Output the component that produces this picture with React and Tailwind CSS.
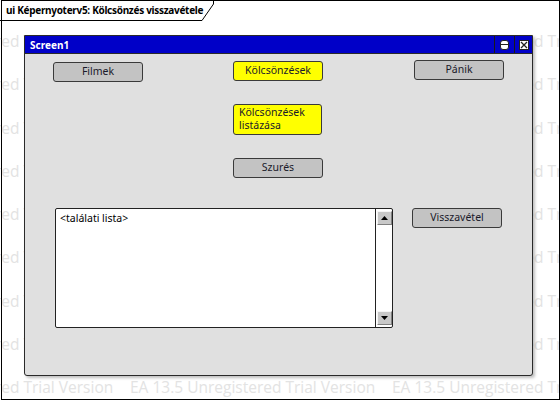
import React from "react";

const WM = "EA 13.5 Unregistered Trial Version";

function Watermark() {
  const rows = [0, 1, 2, 3, 4, 5, 6, 7, 8];
  return (
    <div className="absolute inset-0 z-0 pointer-events-none overflow-hidden">
      {rows.map((r) => (
        <div
          key={r}
          className="absolute left-[-132px] whitespace-nowrap text-[15.5px] leading-[20px] text-[#e3e3e3] font-['Open_Sans',sans-serif]"
          style={{ top: Math.round(31 + r * 43.25) }}
        >
          {[0, 1, 2, 3].map((i) => (
            <span key={i} className="inline-block w-[262px]">
              {WM}
            </span>
          ))}
        </div>
      ))}
    </div>
  );
}

function Btn({ children, yellow, className = "" }) {
  return (
    <div
      className={`w-[90px] h-[20px] rounded-[3px] border border-[#3a3a3a] flex items-center justify-center text-[10.5px] text-[#1a1a2a] ${
        yellow ? "bg-[#ffff00]" : "bg-[#c3c3c3]"
      } ${className}`}
    >
      {children}
    </div>
  );
}

function ScrollBtn({ up }) {
  return (
    <div className="w-[15px] h-[14px] bg-[#c8c8c8] border-t border-l border-t-[#f4f4f4] border-l-[#f4f4f4] border-r border-b border-r-[#808080] border-b-[#808080] flex items-center justify-center">
      <svg width="7" height="4" viewBox="0 0 7 4">
        {up ? (
          <polygon points="3.5,0 7,4 0,4" fill="#000" />
        ) : (
          <polygon points="0,0 7,0 3.5,4" fill="#000" />
        )}
      </svg>
    </div>
  );
}

export default function App() {
  return (
    <div className="relative w-[560px] h-[401px] bg-white overflow-hidden font-['Noto_Sans',sans-serif]">
      <Watermark />

      {/* Diagram frame */}
      <div className="absolute z-[1] left-[1px] top-0 right-[0px] bottom-[1px] border border-black" />

      <div className="relative z-10 flex flex-col">
        {/* Tab */}
        <div className="relative h-[21px] w-[215px]">
          <svg className="absolute inset-0" width="215" height="21">
            <polyline
              points="0,20.5 202,20.5 213.5,4 213.5,0"
              fill="none"
              stroke="#000"
              strokeWidth="1"
            />
          </svg>
          <span className="absolute left-[6px] top-[3px] whitespace-nowrap text-[10px] leading-[14px] font-bold text-black tracking-[-0.3px]">
            ui Képernyoterv5: Kölcsönzés visszavétele
          </span>
        </div>

        {/* Screen window */}
        <div className="ml-[24px] mt-[14px] w-[509px] h-[341px] border border-[#2a2a2a] rounded-b-[3px] bg-[#e0e0e0] flex flex-col shadow-[2px_2px_3px_rgba(0,0,0,0.25)]">
          <div className="h-[18px] bg-[#0000c8] flex items-center border-b border-[#2a2a2a]">
            <span className="pl-[5px] text-[10px] font-bold text-white leading-none">Screen1</span>
            <div className="ml-auto flex h-full">
              <div className="w-[20px] h-full border-l border-[#1a1a1a] flex items-center justify-center">
                <div className="w-[9px] h-[10px] rounded-[3px] bg-white border border-[#222] flex items-center">
                  <div className="w-full h-[1px] bg-[#222]" />
                </div>
              </div>
              <div className="w-[18px] h-full border-l border-[#1a1a1a] flex items-center justify-center">
                <svg width="10" height="10" viewBox="0 0 10 10">
                  <rect x="0.5" y="0.5" width="9" height="9" fill="#fff" stroke="#222" />
                  <path d="M2 2 L8 8 M8 2 L2 8" stroke="#222" strokeWidth="1.3" />
                </svg>
              </div>
            </div>
          </div>

          <div className="flex-1 flex flex-col pl-[28px]">
            <div className="flex items-start">
              <Btn className="mt-[8px]">Filmek</Btn>
              <div className="ml-[90px] flex flex-col mt-[7px]">
                <Btn yellow>Kölcsönzések</Btn>
                <div className="mt-[23px] w-[89px] h-[31px] rounded-[3px] border border-[#3a3a3a] bg-[#ffff00] text-[10.5px] leading-[13px] text-[#1a1a2a] pl-[5px] pt-[1px]">
                  Kölcsönzések
                  <br />
                  listázása
                </div>
                <Btn className="mt-[23px]">Szurés</Btn>
              </div>
              <Btn className="ml-[91px] mt-[6px]">Pánik</Btn>
            </div>

            <div className="flex items-start mt-[30px]">
              <div className="ml-[2px] w-[338px] h-[120px] bg-white border border-[#222] rounded-[2px] flex">
                <div className="flex-1 text-[10.5px] leading-[13px] text-black pl-[4px] pt-[3px]">
                  &lt;találati lista&gt;
                </div>
                <div className="w-[17px] border-l border-[#222] flex flex-col justify-between items-center py-[2px]">
                  <ScrollBtn up />
                  <ScrollBtn />
                </div>
              </div>
              <Btn className="ml-[19px]">Visszavétel</Btn>
            </div>
          </div>
        </div>
      </div>
    </div>
  );
}
